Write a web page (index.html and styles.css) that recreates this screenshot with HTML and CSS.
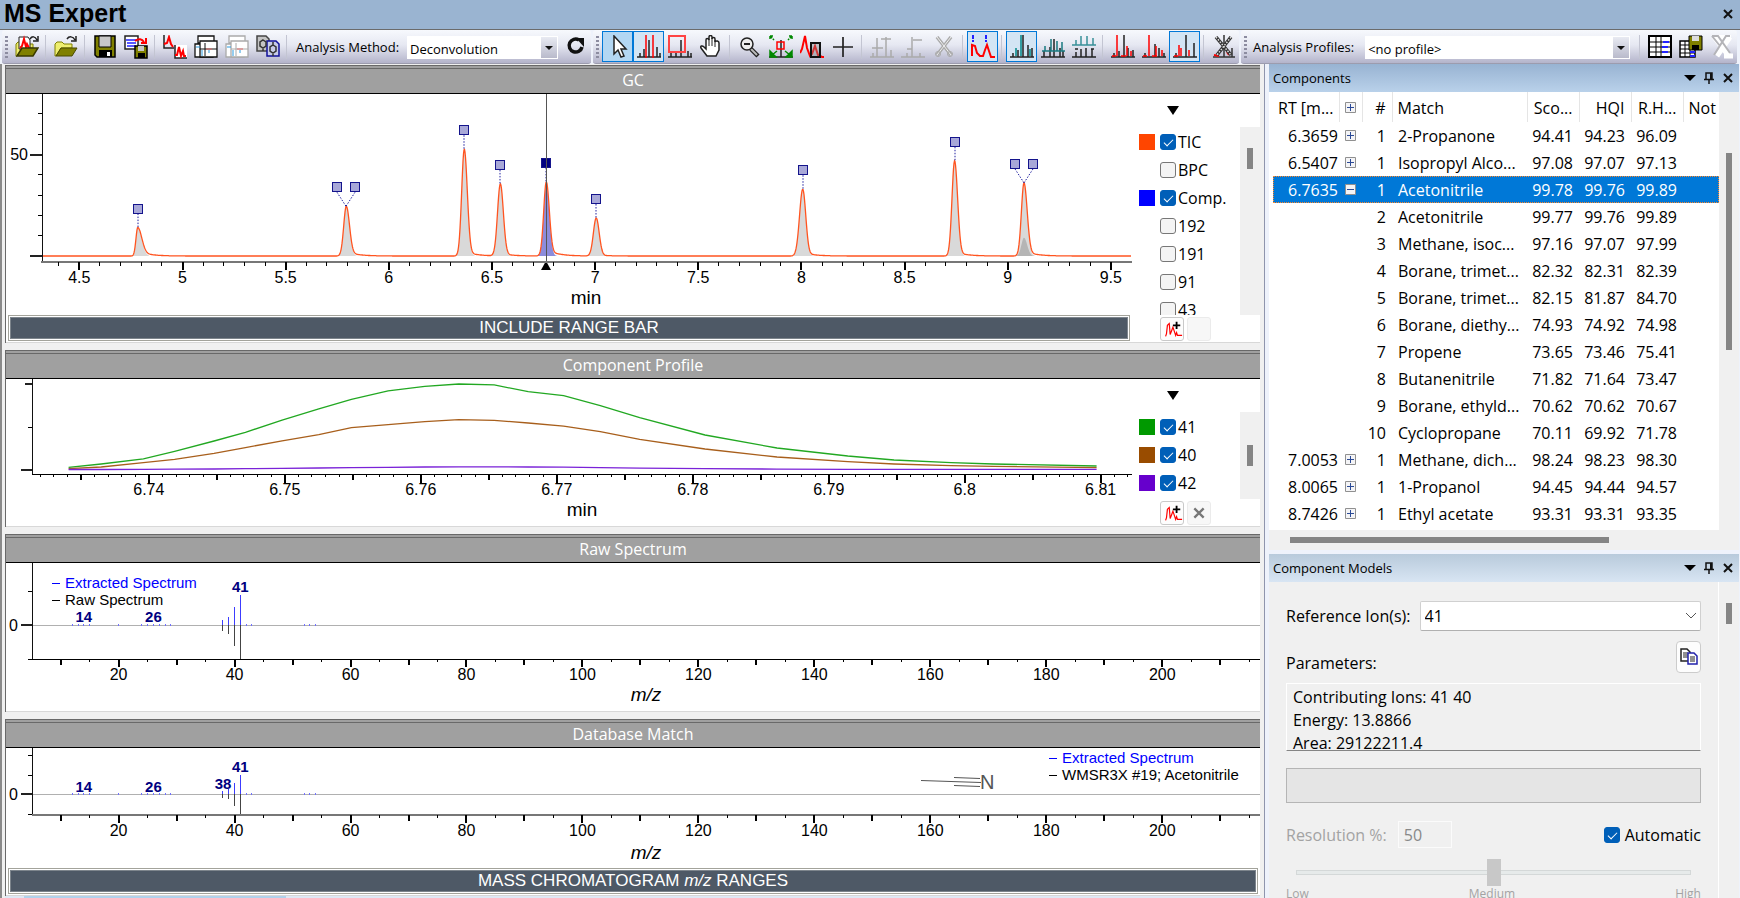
FILE: index.html
```html
<!DOCTYPE html>
<html lang="en">
<head>
    <meta charset="UTF-8">
    <title>MS Expert</title>
    <link rel="stylesheet" href="styles.css">
</head>
<body>
    <!-- shared icon shapes -->
    <svg class="defs" aria-hidden="true">
        <symbol id="i-folder" viewBox="0 0 24 24">
            <path d="M1 21V9l2-2h5l2 2h8v4H7l-5 8z" fill="#eeee70" stroke="#808000"/>
            <path d="M2 21l5-8h16l-5 8z" fill="#808000" stroke="#4a4a00"/>
            <path d="M13 4c2-3 6-3 8 1M22 1v5h-5" fill="none" stroke="#222" stroke-width="1.5"/>
        </symbol>
        <symbol id="i-folder-run" viewBox="0 0 24 24">
            <path d="M1 21V9l2-2h5l2 2h8v4H7l-5 8z" fill="#eeee70" stroke="#808000"/>
            <path d="M4 14V2h9l2 3v8z" fill="#fff" stroke="#222"/>
            <path d="M5 13l2-2 2-7 2 8 1-3 2 4" fill="none" stroke="red" stroke-width="2"/>
            <path d="M2 21l5-8h16l-5 8z" fill="#808000" stroke="#3a3a00" stroke-width="1.5"/>
            <path d="M15 4c2-3 5-3 7 1M23 1v5h-5" fill="none" stroke="#222" stroke-width="1.5"/>
        </symbol>
        <symbol id="i-save" viewBox="0 0 24 24">
            <path d="M2 1h20v21H4l-2-2z" fill="#808000" stroke="#000" stroke-width="1.5"/>
            <path d="M6 1h12v11H6z" fill="#c8c8c8" stroke="#000"/>
            <path d="M6 15h13v7H6z" fill="#000"/>
            <path d="M14 17h3v4h-3z" fill="#fff"/>
        </symbol>
        <symbol id="i-save-as" viewBox="0 0 24 24">
            <path d="M1 1h13v13H1z" fill="#fff" stroke="#222" stroke-width="1.5"/>
            <path d="M2 5h11M3 8h9M3 11h9" fill="none" stroke="#22f" stroke-width="1.5"/>
            <path d="M11 6c4-3 7-2 9 1M22 3v5h-5" fill="none" stroke="red" stroke-width="2"/>
            <path d="M11 11h12v12H11z" fill="#808000" stroke="#000" stroke-width="1.5"/>
            <path d="M14 11h6v5h-6z" fill="#c8c8c8"/>
            <path d="M14 18h7v5h-7z" fill="#000"/>
        </symbol>
        <symbol id="i-two-runs" viewBox="0 0 24 24">
            <path d="M12 10h12v13H12z" fill="#fff"/>
            <path d="M1 0v13h10M12 10v13h12" fill="none" stroke="#222" stroke-width="1.5"/>
            <path d="M1 9l3-1 2-6 2 7 2 3M12 20h2l2-8 2 9 2-5 1 5h2" fill="none" stroke="red" stroke-width="2"/>
        </symbol>
        <symbol id="i-panes" viewBox="0 0 24 24">
            <path d="M4 1h16v7H4zM1 9h18v13H1z" fill="#fff" stroke="currentColor" stroke-width="1.3"/>
            <path d="M6 6h17v16H6z" fill="#fff" stroke="currentColor" stroke-width="1.3"/>
            <path d="M6 14h17M11 8v13" fill="none" stroke="currentColor"/>
            <path d="M2 12h4M8 15v6M15 15v3" fill="none" stroke="#2a9be0"/>
            <path d="M12 14h6" stroke="#d66"/>
        </symbol>
        <symbol id="i-copy-struct" viewBox="0 0 24 24">
            <path d="M1 1h9l3 3v12H1z" fill="#c4c4c4" stroke="#444" stroke-width="1.5"/>
            <path d="M11 6h9l3 3v12H11z" fill="#c8cce8" stroke="#119" stroke-width="1.5"/>
            <path d="M7 5l3 2v4l-3 2-3-2V7zM17 10l3 2v4l-3 2-3-2v-4zM7 13v3M17 18v3M17 7v3" fill="none" stroke="#333" stroke-width="1.5"/>
        </symbol>
        <symbol id="i-refresh" viewBox="0 0 24 24">
            <path d="M18 12a6.5 6.5 0 1 1-3-7" fill="none" stroke="#111" stroke-width="3.5"/>
            <path d="M12 3h8v9z" fill="#111"/>
        </symbol>
        <symbol id="i-pointer" viewBox="0 0 24 24">
            <path d="M8 1v18l4-4 3 7 3-1-3-7h5z" fill="#fff" stroke="#222" stroke-width="1.5"/>
        </symbol>
        <symbol id="i-range" viewBox="0 0 24 24">
            <path d="M0 22h24M3 22v-4M7 22v-8M12 22V5M20 22V12M23 22v-4" stroke="#222" stroke-width="1.5"/>
            <path d="M9 0v23M16 0v23" stroke="red" stroke-width="1.5"/>
        </symbol>
        <symbol id="i-box" viewBox="0 0 24 24">
            <path d="M0 22h24M3 22v-4M8 22v-4M13 22V5M20 22v-6M23 22v-4" stroke="#222" stroke-width="1.5"/>
            <path d="M1 1h16v16H1z" fill="none" stroke="#f44" stroke-width="2"/>
        </symbol>
        <symbol id="i-hand" viewBox="0 0 24 24">
            <path d="M8 21l-6-8c-1-2 1-3 3-1l2 2V5c0-2 2-2 3 0V2c0-2 3-2 3 0v2c0-2 3-2 3 0v3c1-2 4-1 4 1v7l-3 6z" fill="#fff" stroke="#222" stroke-width="1.5"/>
            <path d="M10 4v7M13 3v8M16 5v7" stroke="#222"/>
        </symbol>
        <symbol id="i-zoom-out" viewBox="0 0 24 24">
            <path d="M13 14l7 7" stroke="#222" stroke-width="4.5"/>
            <path d="M13 14l6 6" stroke="#bbb" stroke-width="2"/>
            <circle cx="9" cy="9" r="6" fill="#eee" stroke="#222" stroke-width="1.5"/>
            <path d="M6 9h6" stroke="#222" stroke-width="2"/>
        </symbol>
        <symbol id="i-fit" viewBox="0 0 24 24">
            <path d="M0 22h24M12 22V5M4 22v-3M20 22v-4" stroke="#222" stroke-width="1.5"/>
            <path d="M8 7h7v7H8z" fill="none" stroke="red" stroke-width="1.5"/>
            <path d="M1 1l4 4M1 1h3M1 1v3M23 1l-4 4M23 1h-3M23 1v3" stroke="#080" stroke-width="1.5" stroke-dasharray="3 1"/>
            <path d="M1 22v-6l6 6zM23 22v-6l-6 6zM3 20l5-4M21 20l-5-4" fill="#080" stroke="#080" stroke-width="1.5"/>
        </symbol>
        <symbol id="i-zoom-peak" viewBox="0 0 24 24">
            <path d="M0 18l2-4 3-13 2 12 3 8 2-2 3-8 3 9 4 2h3" fill="none" stroke="red" stroke-width="2"/>
            <path d="M11 8h9v14h-9z" fill="#888" fill-opacity=".4" stroke="#111" stroke-width="2"/>
        </symbol>
        <symbol id="i-cross" viewBox="0 0 24 24">
            <path d="M12 2v20M2 12h20" stroke="#222" stroke-width="1.7"/>
        </symbol>
        <symbol id="i-mark-two" viewBox="0 0 24 24">
            <path d="M0 22h24M3 22v-4M7 22V3M16 22V2M21 22v-7M2 13h11M11 4h10" stroke="#aaa" stroke-width="1.5"/>
        </symbol>
        <symbol id="i-mark-one" viewBox="0 0 24 24">
            <path d="M0 22h24M6 22v-4M11 22V2M12 5h9M6 14h5M19 22v-4" stroke="#aaa" stroke-width="1.5"/>
        </symbol>
        <symbol id="i-cut" viewBox="0 0 24 24">
            <path d="M5 2l14 18M19 2L5 20" stroke="#aaa" stroke-width="3.5"/>
            <path d="M5 2l14 18M19 2L5 20" stroke="#eee"/>
            <circle cx="6" cy="19" r="2.5" fill="none" stroke="#aaa"/>
            <circle cx="18" cy="19" r="2.5" fill="none" stroke="#aaa"/>
        </symbol>
        <symbol id="i-pick" viewBox="0 0 24 24">
            <path d="M2 0v7M15 0v7" stroke="#22f" stroke-width="2" stroke-dasharray="4 1"/>
            <path d="M1 21V10l3 1 2 7 3 3h3l2-6 2-5 2 6 2 6h5" fill="none" stroke="red" stroke-width="2"/>
        </symbol>
        <symbol id="i-overlay" viewBox="0 0 24 24">
            <path d="M0 22h24M3 22v-4M8 22v-7M13 22V0M18 22V10M22 22v-9" stroke="#222" stroke-width="1.5"/>
            <path d="M6 21v-8M11 21V0M20 21v-7" stroke="#088" stroke-width="1.5"/>
        </symbol>
        <symbol id="i-offset" viewBox="0 0 24 24">
            <path d="M0 22h24M3 22v-6M9 22V12M13 22V4M19 22v-9M22 22v-6" stroke="#222" stroke-width="1.5"/>
            <path d="M1 16h23M4 16v-5M10 16V4M16 16V6M21 16V7" stroke="#187a80" stroke-width="1.5"/>
        </symbol>
        <symbol id="i-stack" viewBox="0 0 24 24">
            <path d="M0 22h24M4 22v-5M9 22v-8M14 22v-9M20 22v-8M3 14h3M19 14h3" stroke="#222" stroke-width="1.5"/>
            <path d="M0 10h24M4 10V5M9 10V1M15 10V1M21 10V3" stroke="#389098" stroke-width="1.5"/>
        </symbol>
        <symbol id="i-cmp-a" viewBox="0 0 24 24">
            <path d="M0 22h24M3 22v-4M8 22v-6M13 22V0M17 22v-9M22 22v-7" stroke="#222" stroke-width="1.5"/>
            <path d="M6 21V0M16 21V11M20 21v-5M1 21h4M10 21h5" stroke="red" stroke-width="1.5"/>
        </symbol>
        <symbol id="i-cmp-b" viewBox="0 0 24 24">
            <path d="M0 22h24M3 22v-4M13 22V9M17 22v-9M22 22v-4" stroke="#222" stroke-width="1.5"/>
            <path d="M7 21V0M14 21V11M20 21v-6M1 21h4M10 21h5" stroke="red" stroke-width="1.5"/>
        </symbol>
        <symbol id="i-cmp-c" viewBox="0 0 24 24">
            <path d="M0 22h24M3 22v-4M13 22V0M21 22V8" stroke="#222" stroke-width="1.5"/>
            <path d="M6 21V10M8 21v-8M16 21v-6M1 21h4" stroke="red" stroke-width="1.5"/>
        </symbol>
        <symbol id="i-clear" viewBox="0 0 24 24">
            <path d="M1 22h22M12 22V0M20 22v-9" stroke="#333" stroke-width="1.5"/>
            <path d="M2 20l5 1M15 17l2 3" stroke="red" stroke-width="2"/>
            <path d="M4 2l15 18M19 2L5 20" stroke="#333" stroke-width="3.5"/>
            <path d="M4 2l15 18M19 2L5 20" stroke="#ddd" stroke-width="1.5" stroke-dasharray="1.5 1.5"/>
        </symbol>
        <symbol id="i-table" viewBox="0 0 24 24">
            <path d="M1 1h22v21H1z" fill="#fff" stroke="#000" stroke-width="2"/>
            <path d="M1 7h22M1 12h22M1 17h22M8 1v21M13 1v21" stroke="#000"/>
            <path d="M15 7h6M14 12h6M14 17h6" stroke="#22f" stroke-width="2"/>
        </symbol>
        <symbol id="i-table-save" viewBox="0 0 24 24">
            <path d="M1 6h15v16H1z" fill="#fff" stroke="#000" stroke-width="1.5"/>
            <path d="M1 10h15M1 14h15M1 18h15M6 6v16M11 6v16" stroke="#000"/>
            <path d="M11 17h5M11 21h5" stroke="#22f" stroke-width="2"/>
            <path d="M10 1h13v14H10z" fill="#808000" stroke="#000"/>
            <path d="M13 1h7v5h-7z" fill="#ddd"/>
            <path d="M13 10h7v5h-7z" fill="#000"/>
        </symbol>
        <symbol id="i-no-profile" viewBox="0 0 24 24">
            <path d="M4 2l14 18M20 2L7 21M3 2h18M14 21h9" fill="none" stroke="#fff" stroke-width="5"/>
            <path d="M2 1h6l12 17M20 1h-4L4 20M2 1l8 10" fill="none" stroke="#b4b4b8" stroke-width="2"/>
        </symbol>
        <symbol id="i-add-run" viewBox="0 0 24 24">
            <path d="M5 20l1-3 1-9 2-2 1 12 3-8 3 9 1-3 1 3h5" fill="none" stroke="red" stroke-width="1.3"/>
            <path d="M17 4v8M13 8h8" stroke="#000" stroke-width="2"/>
        </symbol>
        <symbol id="i-x" viewBox="0 0 12 12">
            <path d="M2 2l8 8M10 2l-8 8" stroke="currentColor" stroke-width="2"/>
        </symbol>
        <symbol id="i-pin" viewBox="0 0 12 12">
            <path d="M3 7V1h6v6M1 7.5h10M6 8v4" fill="none" stroke="#111" stroke-width="1.5"/>
            <path d="M8 1v6" stroke="#111" stroke-width="2"/>
        </symbol>
        <symbol id="i-down" viewBox="0 0 12 12">
            <path d="M0 3h12L6 9z" fill="#000"/>
        </symbol>
        <symbol id="i-plus" viewBox="0 0 11 11">
            <path d="M.5.5h10v10H.5z" fill="#f4f4f6" stroke="#909090"/>
            <path d="M2 5.5h7M5.5 2v7" stroke="#2b4a96"/>
        </symbol>
        <symbol id="i-minus" viewBox="0 0 11 11">
            <path d="M.5.5h10v10H.5z" fill="#f4f4f6" stroke="#909090"/>
            <path d="M2 5.5h7" stroke="#2b4a96"/>
        </symbol>
        <symbol id="i-copy" viewBox="0 0 18 18">
            <path d="M1 1h6l3 3v9H1z" fill="#fff" stroke="#222" stroke-width="1.5"/>
            <path d="M3 5h5M3 7h5M3 9h5" stroke="#222"/>
            <path d="M8 5h6l3 3v8H8z" fill="#fff" stroke="#22a" stroke-width="1.5"/>
            <path d="M10 9h5M10 11h5M10 13h5" stroke="#222"/>
        </symbol>
    </svg>

    <header class="titlebar">
        <h1>MS Expert</h1>
        <button class="icon-btn" aria-label="Close"><svg><use href="#i-x"/></svg></button>
    </header>

    <nav class="toolbars">
        <div class="toolbar">
            <span class="grip"></span>
            <button class="tool" aria-label="Open run"><svg><use href="#i-folder-run"/></svg></button>
            <span class="sep"></span>
            <button class="tool" aria-label="Open"><svg><use href="#i-folder"/></svg></button>
            <span class="sep"></span>
            <button class="tool" aria-label="Save"><svg><use href="#i-save"/></svg></button>
            <button class="tool" aria-label="Save as"><svg><use href="#i-save-as"/></svg></button>
            <span class="sep"></span>
            <button class="tool" aria-label="Chromatograms"><svg><use href="#i-two-runs"/></svg></button>
            <button class="tool" aria-label="Arrange panes"><svg><use href="#i-panes"/></svg></button>
            <button class="tool off" aria-label="Restore panes"><svg><use href="#i-panes"/></svg></button>
            <button class="tool" aria-label="Copy structure"><svg><use href="#i-copy-struct"/></svg></button>
            <span class="sep"></span>
            <label for="method">Analysis Method:</label>
            <span class="combo method">
                <select id="method"><option>Deconvolution</option></select>
                <span class="combo-arrow"></span>
            </span>
            <button class="tool" aria-label="Run again"><svg><use href="#i-refresh"/></svg></button>
        </div>
        <div class="toolbar">
            <span class="grip"></span>
            <button class="tool on" aria-label="Select"><svg><use href="#i-pointer"/></svg></button>
            <button class="tool on pale" aria-label="Range"><svg><use href="#i-range"/></svg></button>
            <button class="tool" aria-label="Box"><svg><use href="#i-box"/></svg></button>
            <button class="tool" aria-label="Pan"><svg><use href="#i-hand"/></svg></button>
            <span class="sep"></span>
            <button class="tool" aria-label="Zoom out"><svg><use href="#i-zoom-out"/></svg></button>
            <button class="tool" aria-label="Fit"><svg><use href="#i-fit"/></svg></button>
            <button class="tool" aria-label="Zoom peak"><svg><use href="#i-zoom-peak"/></svg></button>
            <button class="tool" aria-label="Crosshair"><svg><use href="#i-cross"/></svg></button>
            <span class="sep"></span>
            <button class="tool" aria-label="Mark two"><svg><use href="#i-mark-two"/></svg></button>
            <button class="tool" aria-label="Mark one"><svg><use href="#i-mark-one"/></svg></button>
            <button class="tool" aria-label="Remove marks"><svg><use href="#i-cut"/></svg></button>
            <span class="sep"></span>
            <button class="tool on pale" aria-label="Show peaks"><svg><use href="#i-pick"/></svg></button>
            <span class="sep"></span>
            <button class="tool on pale" aria-label="Overlay"><svg><use href="#i-overlay"/></svg></button>
            <button class="tool" aria-label="Offset"><svg><use href="#i-offset"/></svg></button>
            <button class="tool" aria-label="Stack"><svg><use href="#i-stack"/></svg></button>
            <span class="sep"></span>
            <button class="tool" aria-label="Side by side"><svg><use href="#i-cmp-a"/></svg></button>
            <button class="tool" aria-label="Difference"><svg><use href="#i-cmp-b"/></svg></button>
            <button class="tool on pale" aria-label="Mirror"><svg><use href="#i-cmp-c"/></svg></button>
            <span class="sep"></span>
            <button class="tool" aria-label="Clear"><svg><use href="#i-clear"/></svg></button>
        </div>
        <div class="toolbar grow">
            <span class="grip"></span>
            <label for="profile">Analysis Profiles:</label>
            <span class="combo profile">
                <select id="profile"><option>&lt;no profile&gt;</option></select>
                <span class="combo-arrow"></span>
            </span>
            <span class="sep"></span>
            <button class="tool" aria-label="Profile table"><svg><use href="#i-table"/></svg></button>
            <button class="tool" aria-label="Save profile"><svg><use href="#i-table-save"/></svg></button>
            <button class="tool" aria-label="Delete profile"><svg><use href="#i-no-profile"/></svg></button>
        </div>
    </nav>

    <main class="main">
        <div class="workspace">
            <section class="panel">
                <h2>GC</h2>
                <div class="panel-body gc">
                    <div class="plot-col">
                        <svg class="plot" id="gc"></svg>
                        <div class="range-bar"><span>INCLUDE RANGE BAR</span></div>
                    </div>
                    <div class="legend">
                        <button class="legend-menu" aria-label="Trace menu"></button>
                        <div class="legend-scroll">
                            <div class="legend-list">
                                <label><i class="swatch tic"></i><input type="checkbox" checked>TIC</label>
                                <label><i class="swatch"></i><input type="checkbox">BPC</label>
                                <label><i class="swatch comp"></i><input type="checkbox" checked>Comp.</label>
                                <label><i class="swatch"></i><input type="checkbox">192</label>
                                <label><i class="swatch"></i><input type="checkbox">191</label>
                                <label><i class="swatch"></i><input type="checkbox">91</label>
                                <label><i class="swatch"></i><input type="checkbox">43</label>
                            </div>
                            <div class="vscroll"><i></i></div>
                        </div>
                        <div class="legend-btns">
                            <button aria-label="Add trace"><svg><use href="#i-add-run"/></svg></button>
                            <button class="ghost" aria-label="Remove trace" disabled></button>
                        </div>
                    </div>
                </div>
            </section>

            <section class="panel">
                <h2>Component Profile</h2>
                <div class="panel-body small">
                    <div class="plot-col">
                        <svg class="plot" id="cp"></svg>
                    </div>
                    <div class="legend">
                        <button class="legend-menu" aria-label="Ion menu"></button>
                        <div class="legend-scroll">
                            <div class="legend-list">
                                <label><i class="swatch ion41"></i><input type="checkbox" checked>41</label>
                                <label><i class="swatch ion40"></i><input type="checkbox" checked>40</label>
                                <label><i class="swatch ion42"></i><input type="checkbox" checked>42</label>
                            </div>
                            <div class="vscroll low"><i></i></div>
                        </div>
                        <div class="legend-btns">
                            <button aria-label="Add ion"><svg><use href="#i-add-run"/></svg></button>
                            <button class="ghost" aria-label="Remove ion"><svg class="x"><use href="#i-x"/></svg></button>
                        </div>
                    </div>
                </div>
            </section>

            <section class="panel">
                <h2>Raw Spectrum</h2>
                <div class="panel-body medium">
                    <svg class="plot" id="raw"></svg>
                </div>
            </section>

            <section class="panel">
                <h2>Database Match</h2>
                <div class="panel-body small match">
                    <svg class="plot" id="db"></svg>
                    <div class="range-bar"><span>MASS CHROMATOGRAM <em>m/z</em> RANGES</span></div>
                </div>
            </section>

            <div class="bottom-scroll"><i></i></div>
        </div>

        <aside class="dock">
            <section class="pane">
                <div class="pane-head">
                    <h3>Components</h3>
                    <button class="icon-btn" aria-label="Menu"><svg><use href="#i-down"/></svg></button>
                    <button class="icon-btn" aria-label="Pin"><svg><use href="#i-pin"/></svg></button>
                    <button class="icon-btn" aria-label="Close"><svg><use href="#i-x"/></svg></button>
                </div>
                <div class="grid-area">
                    <div class="grid-clip">
                        <table class="grid">
                            <colgroup>
                                <col class="c-rt"><col class="c-exp"><col class="c-num"><col class="c-match">
                                <col class="c-val"><col class="c-val"><col class="c-val"><col>
                            </colgroup>
                            <thead>
                                <tr><th class="l">RT [m...</th><th class="exp"><button aria-label="Expand all"><svg><use href="#i-plus"/></svg></button></th><th>#</th><th class="l">Match</th><th>Sco...</th><th>HQI</th><th>R.H...</th><th class="l">Not</th></tr>
                            </thead>
                            <tbody>
                                <tr><td>6.3659</td><td class="exp"><button aria-label="Expand"><svg><use href="#i-plus"/></svg></button></td><td>1</td><td>2-Propanone</td><td>94.41</td><td>94.23</td><td>96.09</td><td></td></tr>
                                <tr><td>6.5407</td><td class="exp"><button aria-label="Expand"><svg><use href="#i-plus"/></svg></button></td><td>1</td><td>Isopropyl Alco...</td><td>97.08</td><td>97.07</td><td>97.13</td><td></td></tr>
                                <tr class="selected"><td>6.7635</td><td class="exp"><button aria-label="Collapse"><svg><use href="#i-minus"/></svg></button></td><td>1</td><td>Acetonitrile</td><td>99.78</td><td>99.76</td><td>99.89</td><td></td></tr>
                                <tr><td></td><td></td><td>2</td><td>Acetonitrile</td><td>99.77</td><td>99.76</td><td>99.89</td><td></td></tr>
                                <tr><td></td><td></td><td>3</td><td>Methane, isoc...</td><td>97.16</td><td>97.07</td><td>97.99</td><td></td></tr>
                                <tr><td></td><td></td><td>4</td><td>Borane, trimet...</td><td>82.32</td><td>82.31</td><td>82.39</td><td></td></tr>
                                <tr><td></td><td></td><td>5</td><td>Borane, trimet...</td><td>82.15</td><td>81.87</td><td>84.70</td><td></td></tr>
                                <tr><td></td><td></td><td>6</td><td>Borane, diethy...</td><td>74.93</td><td>74.92</td><td>74.98</td><td></td></tr>
                                <tr><td></td><td></td><td>7</td><td>Propene</td><td>73.65</td><td>73.46</td><td>75.41</td><td></td></tr>
                                <tr><td></td><td></td><td>8</td><td>Butanenitrile</td><td>71.82</td><td>71.64</td><td>73.47</td><td></td></tr>
                                <tr><td></td><td></td><td>9</td><td>Borane, ethyld...</td><td>70.62</td><td>70.62</td><td>70.67</td><td></td></tr>
                                <tr><td></td><td></td><td>10</td><td>Cyclopropane</td><td>70.11</td><td>69.92</td><td>71.78</td><td></td></tr>
                                <tr><td>7.0053</td><td class="exp"><button aria-label="Expand"><svg><use href="#i-plus"/></svg></button></td><td>1</td><td>Methane, dich...</td><td>98.24</td><td>98.23</td><td>98.30</td><td></td></tr>
                                <tr><td>8.0065</td><td class="exp"><button aria-label="Expand"><svg><use href="#i-plus"/></svg></button></td><td>1</td><td>1-Propanol</td><td>94.45</td><td>94.44</td><td>94.57</td><td></td></tr>
                                <tr><td>8.7426</td><td class="exp"><button aria-label="Expand"><svg><use href="#i-plus"/></svg></button></td><td>1</td><td>Ethyl acetate</td><td>93.31</td><td>93.31</td><td>93.35</td><td></td></tr>
                            </tbody>
                        </table>
                    </div>
                    <div class="vscroll tall"><i></i></div>
                </div>
                <div class="hscroll"><i></i></div>
            </section>

            <section class="pane models">
                <div class="pane-head dim">
                    <h3>Component Models</h3>
                    <button class="icon-btn" aria-label="Menu"><svg><use href="#i-down"/></svg></button>
                    <button class="icon-btn" aria-label="Pin"><svg><use href="#i-pin"/></svg></button>
                    <button class="icon-btn" aria-label="Close"><svg><use href="#i-x"/></svg></button>
                </div>
                <div class="models-area">
                    <form class="models-form" onsubmit="return false">
                        <div class="row ion-row">
                            <label for="ion">Reference Ion(s):</label>
                            <span class="combo ion">
                                <select id="ion"><option>41</option></select>
                                <svg class="chevron" viewBox="0 0 12 8"><path d="M1 1l5 5 5-5" fill="none" stroke="#555"/></svg>
                            </span>
                        </div>
                        <div class="row param-row">
                            <label for="params">Parameters:</label>
                            <button class="copy-btn" aria-label="Copy parameters"><svg><use href="#i-copy"/></svg></button>
                        </div>
                        <textarea id="params" readonly>Contributing Ions: 41 40
Energy: 13.8866
Area: 29122211.4</textarea>
                        <div class="blank"></div>
                        <div class="row res-row">
                            <label class="muted" for="res">Resolution %:</label>
                            <input type="text" id="res" value="50" disabled>
                            <label class="auto"><input type="checkbox" checked>Automatic</label>
                        </div>
                        <input type="range" class="slider" aria-label="Resolution" min="0" max="100" value="50" disabled>
                        <div class="row scale"><span>Low</span><span>Medium</span><span>High</span></div>
                    </form>
                    <div class="vscroll form"><i></i></div>
                </div>
            </section>
        </aside>
    </main>

    <script src="charts.js"></script>
</body>
</html>
```

FILE: styles.css
```css
* {
    box-sizing: border-box;
}

body {
    margin: 0;
    height: 100vh;
    display: flex;
    flex-direction: column;
    overflow: hidden;
    font-family: "Open Sans", "Noto Sans", sans-serif;
    font-size: 16px;
    color: #000;
    background-color: #eef2fb;
}

h1, h2, h3 {
    margin: 0;
    font-weight: normal;
}

button, select, input, textarea {
    font: inherit;
    color: inherit;
    margin: 0;
    padding: 0;
}

button {
    display: flex;
    align-items: center;
    justify-content: center;
    border: 0;
    background: none;
}

.defs {
    display: none;
}

/* title bar */
.titlebar {
    display: flex;
    align-items: center;
    justify-content: space-between;
    height: 29px;
    flex: none;
    padding: 0 3px 2px 4px;
    background-color: #9ab4d1;
}

.titlebar h1 {
    font: bold 25px/27px "Liberation Sans", Arial, sans-serif;
}

.icon-btn {
    width: 19px;
    height: 19px;
    color: #111;
}

.icon-btn svg {
    width: 12px;
    height: 12px;
}

/* toolbars */
.toolbars {
    display: flex;
    flex: none;
    height: 35px;
    border-top: 1px solid #6b6b6b;
    background-color: #eef2fb;
}

.toolbar {
    display: flex;
    align-items: center;
    height: 34px;
    padding-left: 3px;
    margin-left: 2px;
    border-bottom: 1px solid #9c9cae;
    border-radius: 3px;
    background: linear-gradient(#f7f9fd, #e6e8f2 45%, #b4b4cb);
    font-size: 13px;
}

.toolbar.grow {
    flex: 1;
    margin-right: 3px;
}

.grip {
    width: 3px;
    height: 22px;
    margin-right: 3px;
    background: repeating-linear-gradient(#8c8ca0 0 2px, transparent 2px 4px);
}

.sep {
    width: 1px;
    height: 24px;
    margin: 0 4px 0 3px;
    background-color: #c3c5d2;
}

.tool {
    width: 31px;
    height: 31px;
    border: 1px solid transparent;
    flex: none;
    color: #111;
}

.tool svg {
    width: 24px;
    height: 24px;
}

.tool.on {
    border-color: #0078d7;
    background-color: #b3d7f3;
}

.tool.on.pale {
    background-color: #d3e5f4;
}

.tool.off {
    color: #aaa;
}

.toolbar label {
    margin: 0 8px 0 5px;
}

.toolbar.grow label {
    margin-left: 3px;
}

.combo {
    position: relative;
    display: flex;
}

.combo select {
    appearance: none;
    width: 100%;
    height: 23px;
    padding: 2px 2px 0 3px;
    border: 0;
    border-radius: 0;
    background-color: #fff;
}

.combo-arrow {
    position: absolute;
    right: 1px;
    top: 1px;
    width: 16px;
    height: 21px;
    background: linear-gradient(#e8eaf2, #b9bacb);
    pointer-events: none;
}

.combo-arrow::after {
    content: "";
    position: absolute;
    left: 4px;
    top: 9px;
    border: 4px solid transparent;
    border-top-color: #111;
}

.method {
    width: 151px;
    margin: 2px 2px 0 0;
}

.profile {
    flex: 1;
    margin: 2px 6px 0 3px;
}

/* work area */
.main {
    flex: 1;
    display: flex;
    min-height: 0;
}

.workspace {
    flex: 1;
    min-width: 0;
    display: flex;
    flex-direction: column;
    gap: 7px;
    padding: 1px 4px 0 3px;
    border-left: 2px solid #8a8a8a;
    border-right: 1px solid #8f95ad;
    background-color: #f0f0f0;
    overflow: hidden;
}

.panel {
    flex: none;
    border: solid #696969;
    border-width: 1px 0 0 1px;
    padding-top: 2px;
    background-color: #a0a0a0;
}

.panel h2 {
    height: 26px;
    border-top: 1px solid #696969;
    border-bottom: 1px solid #000;
    color: #fff;
    font-size: 16px;
    line-height: 22px;
    text-align: center;
}

.panel-body {
    display: flex;
    height: 249px;
    background-color: #fff;
    border-bottom: 1px solid #d8d8d8;
}

.panel-body.small {
    height: 148px;
}

.panel-body.medium {
    height: 149px;
}

.panel-body.match {
    flex-direction: column;
}

.plot-col {
    flex: 1;
    min-width: 0;
    display: flex;
    flex-direction: column;
}

.plot {
    flex: 1;
    width: 100%;
    min-height: 0;
    min-width: 0;
    font-family: "Liberation Sans", Arial, sans-serif;
    font-size: 16px;
}

.plot .unit {
    font-size: 19px;
}

.plot .italic {
    font-style: italic;
}

.plot .mass {
    font-size: 15px;
    font-weight: bold;
    fill: #000080;
}

.plot .key {
    font-size: 15px;
}

.plot .atom {
    font-size: 20px;
    fill: #555;
}

.range-bar {
    flex: none;
    height: 26px;
    margin: 0 2px 1px 2px;
    padding: 1px;
    border: 1px solid #a3a39b;
}

.range-bar span {
    display: block;
    height: 22px;
    border: 1px solid #7d858c;
    background-color: #4e5966;
    color: #fff;
    font: 17px/20px "Liberation Sans", Arial, sans-serif;
    text-align: center;
}

/* trace legend */
.legend {
    flex: none;
    width: 128px;
    display: flex;
    flex-direction: column;
}

.legend-menu {
    width: 82px;
    height: 33px;
    flex: none;
}

.legend-menu::before {
    content: "";
    border: 6px solid transparent;
    border-top: 9px solid #000;
    border-bottom: 0;
}

.legend-scroll {
    flex: 1;
    min-height: 0;
    display: flex;
}

.legend-list {
    flex: 1;
    padding-top: 1px;
    overflow: hidden;
}

.legend-list label {
    display: flex;
    align-items: center;
    height: 28px;
    padding-left: 7px;
}

.swatch {
    width: 16px;
    height: 16px;
    margin-right: 5px;
}

.tic { background-color: #ff4500; }
.comp { background-color: #0000ff; }
.ion41 { background-color: #009900; }
.ion40 { background-color: #994c00; }
.ion42 { background-color: #6600cc; }

input[type="checkbox"] {
    appearance: none;
    width: 16px;
    height: 16px;
    margin-right: 2px;
    border: 1px solid #777;
    border-radius: 3px;
    background-color: #f4f4f4;
}

input[type="checkbox"]:checked {
    border-color: #005fb8;
    background-color: #005fb8;
}

input[type="checkbox"]:checked::after {
    content: "";
    display: block;
    width: 8px;
    height: 4px;
    margin: 4px 0 0 3px;
    border: solid #fff;
    border-width: 0 0 1px 1px;
    transform: rotate(-45deg);
}

.legend-btns {
    display: flex;
    gap: 3px;
    height: 27px;
    flex: none;
    padding: 2px 0 0 28px;
}

.legend-btns button {
    width: 24px;
    height: 24px;
    border: 1px solid #c9c9c9;
    border-radius: 3px;
    background-color: #fdfdfd;
}

.legend-btns .ghost {
    border-color: #ebebeb;
    background-color: #f7f7f7;
    color: #777;
}

.legend-btns svg {
    width: 24px;
    height: 24px;
}

.legend-btns .x {
    width: 14px;
    height: 14px;
}

/* scroll bars */
.vscroll {
    flex: none;
    width: 20px;
    padding: 21px 7px 0;
    background-color: #f0f0f0;
}

.vscroll i {
    display: block;
    height: 21px;
    background-color: #858585;
}

.vscroll.low {
    padding-top: 33px;
}

.vscroll.tall {
    padding-top: 61px;
}

.vscroll.tall i {
    height: 197px;
}

.hscroll {
    height: 20px;
    padding: 7px 130px 0 21px;
    background-color: #f0f0f0;
}

.hscroll i {
    display: block;
    height: 6px;
    background-color: #858585;
}

.bottom-scroll {
    flex: none;
    height: 4px;
    margin-top: -7px;
    padding-left: 19px;
    background-color: #dfe8f5;
}

.bottom-scroll i {
    display: block;
    width: 262px;
    height: 4px;
    background-color: #b1d2ec;
}

/* docked panes */
.dock {
    flex: none;
    width: 475px;
    display: flex;
    flex-direction: column;
    gap: 4px;
    padding: 0 1px 0 4px;
}

.pane-head {
    display: flex;
    align-items: center;
    height: 28px;
    padding: 0 2px 0 4px;
    background: linear-gradient(#98b3d2, #b9d1ea);
}

.pane-head.dim {
    background: linear-gradient(#b8cadb, #d8e5f3);
}

.pane-head h3 {
    flex: 1;
    font-size: 13px;
}

.grid-area {
    display: flex;
    height: 438px;
    background-color: #fff;
}

.grid-clip {
    flex: 1;
    min-width: 0;
    padding-left: 4px;
    overflow: hidden;
}

.grid {
    width: 100%;
    table-layout: fixed;
    border-collapse: collapse;
}

.c-rt { width: 66px; }
.c-exp { width: 23px; }
.c-num { width: 30px; }
.c-match { width: 135px; }
.c-val { width: 52px; }

.grid th,
.grid td {
    height: 27px;
    padding: 0 6px 0 0;
    font-weight: normal;
    line-height: 24px;
    text-align: right;
    white-space: nowrap;
}

.grid th {
    height: 30px;
    padding-top: 2px;
    border-right: 1px solid #e5e5e5;
}

.grid th:last-child {
    border-right: 0;
}

.grid td:first-child {
    padding-right: 1px;
}

.grid .l {
    padding: 2px 0 0 5px;
    text-align: left;
}

.grid td:nth-child(4) {
    padding: 0 0 0 6px;
    text-align: left;
}

.grid .exp {
    padding: 0;
}

.exp button {
    margin: auto;
}

.exp svg {
    width: 11px;
    height: 11px;
}

.grid .selected {
    background-color: #0078d7;
    color: #fff;
    outline: 1px dotted #ff8728;
    outline-offset: -1px;
}

.models {
    flex: 1;
    display: flex;
    flex-direction: column;
    min-height: 0;
}

.models-area {
    flex: 1;
    min-height: 0;
    display: flex;
    background-color: #f0f0f0;
}

.models-form {
    flex: 1;
    min-width: 0;
    padding: 19px 17px 0 17px;
    border-right: 1px solid #fff;
    overflow: hidden;
}

.row {
    display: flex;
    align-items: center;
}

.combo.ion {
    flex: 1;
    margin-left: 9px;
}

.combo.ion select {
    height: 30px;
    padding: 0 4px;
    border: 1px solid #d0d0d0;
    border-bottom-color: #b0b0b0;
    border-radius: 2px;
}

.chevron {
    position: absolute;
    right: 4px;
    top: 11px;
    width: 12px;
    height: 8px;
    pointer-events: none;
}

.param-row {
    justify-content: space-between;
    margin-top: 9px;
    height: 33px;
}

.param-row label {
    padding-top: 12px;
}

.copy-btn {
    width: 25px;
    height: 32px;
    border: 1px solid #ccc;
    border-radius: 4px;
    background-color: #fdfdfd;
}

.copy-btn svg {
    width: 18px;
    height: 18px;
}

textarea {
    display: block;
    width: 100%;
    height: 68px;
    margin-top: 10px;
    padding: 2px 6px;
    border: 1px solid #fff;
    border-bottom-color: #858585;
    border-radius: 0;
    background-color: #f0f0f0;
    line-height: 23px;
    resize: none;
    overflow: hidden;
}

.blank {
    height: 35px;
    margin-top: 17px;
    border: 1px solid #b5b5b5;
    background-color: #e5e5e5;
}

.res-row {
    margin-top: 18px;
}

.muted {
    color: #a3a3a3;
}

#res {
    width: 54px;
    height: 27px;
    margin-left: 11px;
    padding-left: 5px;
    border: 1px solid #fbfbfb;
    background-color: #f0f0f0;
    color: #888;
}

.auto {
    display: flex;
    align-items: center;
    gap: 3px;
    margin-left: auto;
}

.slider {
    appearance: none;
    display: block;
    width: auto;
    min-width: calc(100% - 20px);
    height: 27px;
    margin: 11px 10px 0;
    background: none;
}

.slider::-webkit-slider-runnable-track {
    height: 5px;
    border: 1px solid #d4d8d8;
    background-color: #e6eaea;
}

.slider::-webkit-slider-thumb {
    appearance: none;
    width: 14px;
    height: 27px;
    margin-top: -12px;
    background-color: #c8c8c8;
}

.scale {
    justify-content: space-between;
    color: #a3a3a3;
    font-size: 12px;
    line-height: 16px;
}
```

FILE: charts.js
```js
var NS = "http://www.w3.org/2000/svg";

function add(svg, name, attrs, text) {
    var el = document.createElementNS(NS, name);
    for (var k in attrs) el.setAttribute(k, attrs[k]);
    if (text !== undefined) el.textContent = text;
    svg.appendChild(el);
    return el;
}

function line(svg, x1, y1, x2, y2, color, width) {
    return add(svg, "line", {
        x1: x1, y1: y1, x2: x2, y2: y2,
        stroke: color || "#000",
        "stroke-width": width || 1,
        "shape-rendering": "crispEdges"
    });
}

function label(svg, x, y, text, cls, anchor, fill) {
    var attrs = { x: x, y: y, "class": cls || "", "text-anchor": anchor || "middle" };
    if (fill) attrs.fill = fill;
    return add(svg, "text", attrs, text);
}

// linear scale from data to pixels
function scale(d0, d1, p0, p1) {
    return function (v) {
        return p0 + (v - d0) * (p1 - p0) / (d1 - d0);
    };
}

// chromatogram
function drawGC() {
    var svg = document.getElementById("gc");
    svg.innerHTML = "";
    var w = svg.clientWidth;
    var x = scale(4.3165, 9.5977, 35.5, w - 1);
    var y = scale(0, 50, 162, 60.5);
    var peaks = [
        { t: 4.783, h: 14, l: 1.8, r: 4, tail: 0.2, m: [0] },
        { t: 5.794, h: 24.5, l: 2.6, r: 3.2, tail: 0.1, m: [-9, 9] },
        { t: 6.3659, h: 52.6, l: 2.6, r: 3, tail: 0.05, m: [0] },
        { t: 6.5407, h: 35.5, l: 2.8, r: 3, tail: 0.04, m: [0] },
        { t: 6.7635, h: 36.5, l: 2.6, r: 3, tail: 0.1, m: [0], sel: true },
        { t: 7.0053, h: 18.7, l: 2.8, r: 3, tail: 0.03, m: [0] },
        { t: 8.0065, h: 32.9, l: 3.2, r: 3, tail: 0.06, m: [0] },
        { t: 8.7426, h: 46.9, l: 2.6, r: 3, tail: 0.05, m: [0] },
        { t: 9.079, h: 36, l: 2.6, r: 3.2, tail: 0.08, m: [-9, 9], inner: true }
    ];

    function shape(p, dx) {
        var s = dx < 0 ? p.l : p.r;
        return p.h * Math.exp(-dx * dx / (2 * s * s));
    }

    function area(p, k, color) {
        var cx = x(p.t), d = "M" + (cx - 9) + " " + y(0);
        for (var i = -9; i <= 11; i += 0.5) d += "L" + (cx + i) + " " + y(shape(p, i) * k);
        add(svg, "path", { d: d + "L" + (cx + 11) + " " + y(0) + "z", fill: color });
    }

    peaks.forEach(function (p) {
        area(p, 0.97, p.sel ? "#8c8cdc" : "#d9d9d9");
        if (p.inner) area(p, 0.25, "#b5b5b5");
    });

    var d = "";
    for (var px = 36; px <= w - 1; px += 0.5) {
        var v = 0;
        peaks.forEach(function (p) {
            var dx = px - x(p.t);
            v += shape(p, dx);
            if (dx > 0) v += p.h * p.tail * (1 - Math.exp(-dx * dx / 50)) * Math.exp(-dx / 10);
        });
        d += (d ? "L" : "M") + px + " " + y(v).toFixed(1);
    }
    add(svg, "path", { d: d, fill: "none", stroke: "#ff5420", "stroke-width": 1.3 });

    // markers
    peaks.forEach(function (p) {
        var cx = Math.round(x(p.t)), top = y(p.h);
        p.m.forEach(function (off) {
            add(svg, "line", {
                x1: cx + off, y1: top - 14, x2: cx, y2: top,
                stroke: "#2020a0", "stroke-dasharray": "1.5 1.5"
            });
            add(svg, "rect", {
                x: cx + off - 4.5, y: Math.round(top - 23) - 0.5, width: 9, height: 9,
                fill: p.sel ? "#000080" : "#a8a8d8", stroke: "#14148c"
            });
        });
        if (p.sel) {
            line(svg, cx, 0, cx, 168, "#555");
            add(svg, "path", { d: "M" + cx + " 167l5 9h-10z" });
        }
    });

    line(svg, 36, 0, 36, 168, "#111", 1);
    line(svg, 35, 168, w, 168, "#777", 2);
    for (var i = 1; i <= 7; i++) {
        if (i != 5) line(svg, 32, y(i * 10), 36, y(i * 10));
    }
    line(svg, 24, y(50), 36, y(50), "#222", 2);
    line(svg, 24, y(0), 36, y(0), "#222", 2);
    label(svg, 22, y(50) + 5, "50", "", "end");
    for (i = 44; i <= 95; i++) {
        var tx = x(i / 10);
        if (i % 5) {
            line(svg, tx, 168, tx, 172);
        } else {
            line(svg, tx, 168, tx, 176, "#000", 2);
            label(svg, tx, 189, String(i / 10));
        }
    }
    label(svg, w / 2 + 17, 210, "min", "unit");
}

// ion profiles of the selected component
function drawProfile() {
    var svg = document.getElementById("cp");
    svg.innerHTML = "";
    var w = svg.clientWidth;
    var x = scale(6.73141, 6.81223, 26, w - 1);
    var y = scale(0, 100, 91, 5);
    var t = [6.7341, 6.7365, 6.7396, 6.7419, 6.7448, 6.7471, 6.7498, 6.7525, 6.7549, 6.7576, 6.7603, 6.7628,
        6.7654, 6.7679, 6.7705, 6.7732, 6.7761, 6.7809, 6.7862, 6.7914, 6.7948, 6.799, 6.8021, 6.8097];
    var series = [
        ["#22a822", [3, 7, 13, 21.7, 33.7, 43.8, 58, 71, 82.2, 92, 97.3, 100, 99, 91, 86.4, 74.8, 60.8, 40.7, 25.6, 16.3, 11.6, 8.5, 7, 4.7]],
        ["#a85f1c", [1.5, 3.5, 8.5, 12.4, 19.4, 26, 34, 41, 49.2, 52.7, 56.2, 58.5, 57.8, 54.7, 51, 44.5, 35.7, 24.4, 15.1, 9.7, 7, 5, 4.2, 2.7]],
        ["#7a22d8", [0.6, 0.6, 0.8, 0.9, 1.2, 1.5, 1.9, 2.3, 2.8, 3, 3.5, 3.6, 3.6, 3.5, 3.4, 2.8, 2.2, 1.6, 1, 0.8, 0.8, 0.8, 0.8, 0.8]]
    ];
    series.forEach(function (s) {
        var pts = s[1].map(function (v, i) {
            return x(t[i]).toFixed(1) + "," + y(v).toFixed(1);
        });
        add(svg, "polyline", { points: pts.join(" "), fill: "none", stroke: s[0], "stroke-width": 1.3 });
    });

    line(svg, 26, 0, 26, 96, "#111", 1);
    line(svg, 26, 95, w, 95);
    line(svg, 19, y(100), 26, y(100), "#222", 2);
    line(svg, 22, y(50), 26, y(50));
    line(svg, 15, y(0), 26, y(0), "#222", 2);
    for (var i = 6732; i <= 6812; i++) {
        var tx = x(i / 1000);
        if (i % 10 === 0) {
            line(svg, tx, 95, tx, 104, "#000", 2);
            label(svg, tx, 116, String(i / 1000));
        } else if (i % 5 === 0) {
            line(svg, tx, 95, tx, 101, "#000", 2);
        } else {
            line(svg, tx, 95, tx, 98);
        }
    }
    label(svg, w / 2 + 13, 137, "min", "unit");
}

// mirrored mass spectrum: extracted above the line, reference below
function drawSpectrum(id, o) {
    var svg = document.getElementById(id);
    svg.innerHTML = "";
    var w = svg.clientWidth;
    var x = scale(5.06, 216.86, 26, w);

    line(svg, 26, o.zero, w, o.zero, "#b0b0b0");
    o.sticks.forEach(function (s) {
        line(svg, x(s[0]), o.zero - s[1], x(s[0]), o.zero, "#3c3cff");
        line(svg, x(s[0]), o.zero, x(s[0]), o.zero + s[2], "#444");
    });
    [12, 13, 14, 15, 20, 24, 25, 26, 27, 28, 29, 42, 43, 52, 53, 54].forEach(function (m) {
        line(svg, x(m), o.zero - 1, x(m), o.zero + 1, "#7070ff");
    });
    o.masses.forEach(function (m) {
        label(svg, x(m[0]), m[1], m[0], "mass");
    });

    line(svg, 26, 0, 26, o.axis, "#111");
    line(svg, 26, o.axis, w, o.axis, o.axisColor, o.axisWidth);
    line(svg, 15, o.zero, 26, o.zero, "#222", 2);
    label(svg, 12, o.zero + 6, "0", "", "end");
    o.minor.forEach(function (v) {
        line(svg, 22, v, 26, v);
    });
    for (var m = 10; m <= 215; m += 5) {
        var tx = x(m);
        if (m % 20 === 0) {
            line(svg, tx, o.axis, tx, o.axis + 8, "#000", 2);
            label(svg, tx, o.axis + 21, m);
        } else if (m % 10 === 0) {
            line(svg, tx, o.axis, tx, o.axis + 6, "#000", 2);
        } else {
            line(svg, tx, o.axis, tx, o.axis + 3);
        }
    }
    label(svg, w / 2 + 13, o.unitY, "m/z", "unit italic");

    var kx = o.keyRight ? w - o.keyRight : 46;
    o.key.forEach(function (k, i) {
        var ky = o.keyY + i * 17;
        line(svg, kx, ky - 5, kx + 8, ky - 5, k[1]);
        label(svg, kx + 13, ky, k[0], "key", "start", k[1]);
    });
    return svg;
}

function drawRaw() {
    drawSpectrum("raw", {
        zero: 62, axis: 96, axisColor: "#000", axisWidth: 1, minor: [28, 96], unitY: 138,
        sticks: [[38, 5, 6], [39, 8, 9], [40, 18, 21], [41, 30, 34]],
        masses: [[14, 59], [26, 59], [41, 29]],
        keyY: 25,
        key: [["Extracted Spectrum", "#0000ff"], ["Raw Spectrum", "#000"]]
    });
}

function drawMatch() {
    var svg = drawSpectrum("db", {
        zero: 46, axis: 67, axisColor: "#777", axisWidth: 2, minor: [7, 27, 66], unitY: 111,
        sticks: [[38, 3, 4], [39, 5, 5], [40, 11, 12], [41, 19, 20]],
        masses: [[14, 44], [26, 44], [38, 41], [41, 24]],
        keyY: 15, keyRight: 211,
        key: [["Extracted Spectrum", "#0000ff"], ["WMSR3X #19; Acetonitrile", "#000"]]
    });
    // acetonitrile structure
    var mx = svg.clientWidth - 339;
    add(svg, "path", {
        d: "M" + mx + " 32.5L" + (mx + 60) + " 34.5M" + (mx + 33) + " 29.5l26 1M" + (mx + 33) + " 37.5l26 1",
        fill: "none", stroke: "#555", "stroke-width": 1.2
    });
    label(svg, mx + 59, 41, "N", "atom", "start");
}

function drawAll() {
    drawGC();
    drawProfile();
    drawRaw();
    drawMatch();
}

window.addEventListener("resize", drawAll);
drawAll();
```
